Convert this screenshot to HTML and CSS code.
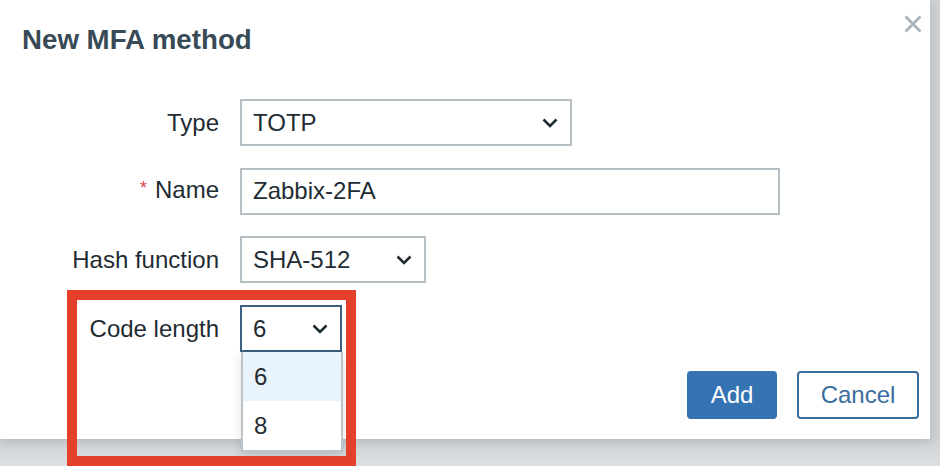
FILE: index.html
```html
<!DOCTYPE html>
<html>
<head>
<meta charset="utf-8">
<link rel="stylesheet" href="styles.css">
</head>
<body>
<div class="dialog">
  <div class="header">
    <h1 class="title">New MFA method</h1>
    <button class="close" aria-label="Close">
      <svg width="18" height="18" viewBox="0 0 18 18"><path d="M1.5 1.5L16.5 16.5M16.5 1.5L1.5 16.5" stroke="#aab3b9" stroke-width="2.8" fill="none"/></svg>
    </button>
  </div>
  <div class="form">
    <label class="label">Type</label>
    <div class="field"><div class="select w-type"><span>TOTP</span><svg class="chev" width="16" height="10" viewBox="0 0 16 10"><path d="M1.5 1.5L8 8L14.5 1.5" stroke="#1f2c33" stroke-width="2.6" fill="none"/></svg></div></div>

    <label class="label"><span class="req">*</span>Name</label>
    <div class="field"><div class="input w-name">Zabbix-2FA</div></div>

    <label class="label">Hash function</label>
    <div class="field"><div class="select w-hash"><span>SHA-512</span><svg class="chev" width="16" height="10" viewBox="0 0 16 10"><path d="M1.5 1.5L8 8L14.5 1.5" stroke="#1f2c33" stroke-width="2.6" fill="none"/></svg></div></div>

    <label class="label">Code length</label>
    <div class="field">
      <div class="select w-code focus"><span>6</span><svg class="chev" width="16" height="10" viewBox="0 0 16 10"><path d="M1.5 1.5L8 8L14.5 1.5" stroke="#1f2c33" stroke-width="2.6" fill="none"/></svg>
        <ul class="dropdown">
          <li class="opt hover">6</li>
          <li class="opt">8</li>
        </ul>
      </div>
    </div>
  </div>
  <div class="footer">
    <button class="btn primary">Add</button>
    <button class="btn secondary">Cancel</button>
  </div>
  <div class="highlight"></div>
</div>
</body>
</html>
```

FILE: styles.css
```css
html, body {
  margin: 0;
  padding: 0;
}
body {
  width: 940px;
  height: 466px;
  overflow: hidden;
  background: linear-gradient(to bottom, #cdd1d4 0px, #cdd1d4 439px, #dde0e2 466px);
  font-family: "Liberation Sans", Arial, sans-serif;
  color: #1f2c33;
}
.dialog {
  position: relative;
  width: 930px;
  height: 439px;
  background: #ffffff;
  box-shadow: 0 2px 10px rgba(0,0,0,0.12);
}
.header {
  display: flex;
  justify-content: space-between;
  align-items: flex-start;
  height: 99px;
}
.title {
  margin: 24px 0 0 22px;
  font-size: 27.7px;
  line-height: 32px;
  font-weight: bold;
  color: #384a56;
}
.close {
  margin: 15px 8px 0 0;
  padding: 0;
  border: none;
  background: none;
  width: 18px;
  height: 18px;
}
.close svg { display: block; }
.form {
  display: grid;
  grid-template-columns: 219px 1fr;
  column-gap: 21px;
  row-gap: 21.7px;
  align-items: center;
}
.label {
  text-align: right;
  font-size: 24px;
  line-height: 28px;
  color: #1f2c33;
}
.req {
  color: #d64545;
  font-size: 18px;
  position: relative;
  top: -4px;
  margin-right: 8px;
}
.field {
  display: flex;
}
.select, .input {
  position: relative;
  box-sizing: border-box;
  height: 47px;
  border: 2px solid #b5bfc4;
  display: flex;
  align-items: center;
  padding: 0 12px 0 11px;
  font-size: 24px;
  background: #fff;
}
.select {
  justify-content: space-between;
}
.chev { display: block; }
.w-type { width: 332px; }
.w-name { width: 540px; }
.w-hash { width: 186px; }
.w-code { width: 102px; }
.focus { border-color: #3d6080; }
.dropdown {
  position: absolute;
  top: 45px;
  left: -1px;
  width: 102px;
  box-sizing: border-box;
  margin: 0;
  padding: 0;
  list-style: none;
  border: 2px solid #bcc4c9;
  border-top: none;
  background: #fff;
  box-shadow: 0 4px 10px rgba(0,0,0,0.12);
  z-index: 2;
}
.opt {
  height: 49px;
  line-height: 49px;
  padding-left: 11px;
  font-size: 24px;
}
.opt.hover {
  background: #e9f3fc;
}
.footer {
  display: flex;
  justify-content: flex-end;
  gap: 20px;
  padding-right: 11px;
  margin-top: 19px;
}
.btn {
  box-sizing: border-box;
  height: 48px;
  border-radius: 4px;
  font-family: "Liberation Sans", Arial, sans-serif;
  font-size: 24px;
  padding: 0;
}
.primary {
  width: 90px;
  background: #3573b3;
  border: 2px solid #3573b3;
  color: #ffffff;
}
.secondary {
  width: 122px;
  background: #ffffff;
  border: 2px solid #3a6d9e;
  color: #3a6d9e;
}
.highlight {
  position: absolute;
  left: 67px;
  top: 290px;
  width: 289px;
  height: 176px;
  box-sizing: border-box;
  border: 10px solid #e5402a;
  z-index: 3;
  pointer-events: none;
}
```
